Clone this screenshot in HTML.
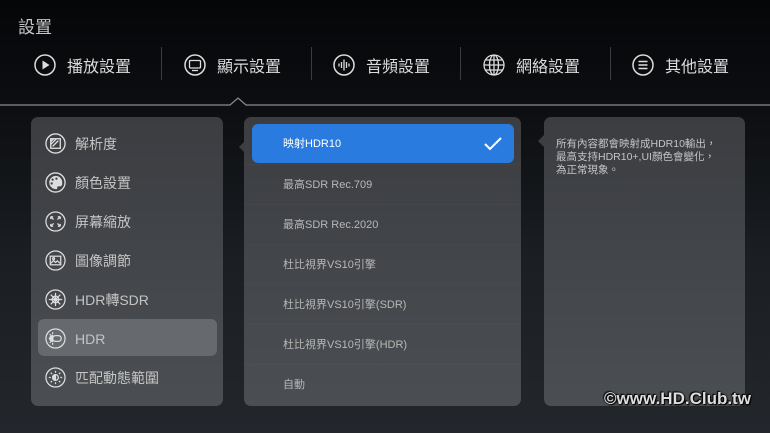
<!DOCTYPE html>
<html><head><meta charset="utf-8"><style>
*{margin:0;padding:0;box-sizing:border-box}
body{width:770px;height:433px;overflow:hidden;position:relative;font-family:"Liberation Sans","Noto Sans CJK TC",sans-serif;background:linear-gradient(#050608 0%,#0c0e11 25%,#1b1e22 60%,#23272c 100%);color:#ccc}
.a{position:absolute}
.title{left:18px;top:13px;font-size:17px;color:#c8c8c8}
.tab{top:53px;height:24px;display:flex;align-items:center;font-size:16px;color:#dcdcdc}
.tab svg{margin-right:11px}
.div{top:47px;width:1px;height:33px;background:#3a3c40}
.panel{border-radius:7px;background:linear-gradient(#3b3d41,#4b4e52)}
.li{left:0;height:39px;display:flex;align-items:center;font-size:14px;color:#c4c4c4}
.li svg{margin:0 9px 0 14px}
.mi{left:0;width:277px;height:40px;line-height:40px;padding-left:39px;font-size:11px;color:#b8b8b8;border-top:1px solid rgba(255,255,255,.025)}
</style></head><body>
<div class="a title">設置</div>
<div class="a tab" style="left:34px"><svg width="22" height="22" viewBox="0 0 22 22"><circle cx="11" cy="11" r="10" fill="none" stroke="#ddd" stroke-width="1.5"/><path d="M8.5 6.5L15.5 11L8.5 15.5Z" fill="#ddd"/></svg>播放設置</div>
<div class="a div" style="left:161px"></div>
<div class="a tab" style="left:184px"><svg width="22" height="22" viewBox="0 0 22 22"><circle cx="11" cy="11" r="10" fill="none" stroke="#ddd" stroke-width="1.5"/><rect x="5.5" y="6.5" width="11" height="7.5" rx="1" fill="none" stroke="#ddd" stroke-width="1.3"/><path d="M8 16.5h6" stroke="#ddd" stroke-width="1.3"/></svg>顯示設置</div>
<div class="a div" style="left:311px"></div>
<div class="a tab" style="left:333px"><svg width="22" height="22" viewBox="0 0 22 22"><circle cx="11" cy="11" r="10" fill="none" stroke="#ddd" stroke-width="1.5"/><path d="M6 9.5v3M8.5 8v6M11 5.5v11M13.5 8v6M16 9.5v3" stroke="#ddd" stroke-width="1.3"/></svg>音頻設置</div>
<div class="a div" style="left:460px"></div>
<div class="a tab" style="left:483px"><svg width="22" height="22" viewBox="0 0 22 22"><g fill="none" stroke="#ddd" stroke-width="1.3"><circle cx="11" cy="11" r="10"/><ellipse cx="11" cy="11" rx="4.5" ry="10"/><path d="M1 11h20M3 6h16M3 16h16M11 1v20"/></g></svg>網絡設置</div>
<div class="a div" style="left:610px"></div>
<div class="a tab" style="left:632px"><svg width="22" height="22" viewBox="0 0 22 22"><circle cx="11" cy="11" r="10" fill="none" stroke="#ddd" stroke-width="1.5"/><path d="M6.5 7.5h9M6.5 11h9M6.5 14.5h9" stroke="#ddd" stroke-width="1.5"/></svg>其他設置</div>
<svg class="a" style="left:0;top:97px" width="770" height="10"><path d="M0 8H230L238 1L246 8H770" fill="none" stroke="#8a8c90" stroke-width="1.2"/></svg>

<div class="a panel" style="left:31px;top:117px;width:192px;height:289px">
<div class="a" style="left:7px;top:202px;width:179px;height:37px;background:#66696d;border-radius:6px"></div>
<div class="a li" style="top:7px"><svg width="21" height="21" viewBox="0 0 22 22"><g fill="none" stroke="#ddd" stroke-width="1.4"><circle cx="11" cy="11" r="10"/><rect x="6" y="6" width="10" height="10"/><path d="M6 12l6-6M6 9l3-3M8 14l6-6"/></g></svg>解析度</div>
<div class="a li" style="top:46px"><svg width="21" height="21" viewBox="0 0 22 22"><circle cx="11" cy="11" r="10" fill="none" stroke="#ddd" stroke-width="1.4"/><path d="M11 4a7 7 0 1 0 1 14c2 0-0.5-3 2-3h2a2.5 2.5 0 0 0 2-3a7 7 0 0 0-7-8z" fill="#ddd"/><circle cx="8" cy="8" r="1.2" fill="#444"/><circle cx="12" cy="7" r="1.2" fill="#444"/><circle cx="7" cy="12" r="1.2" fill="#444"/></svg>顏色設置</div>
<div class="a li" style="top:85px"><svg width="21" height="21" viewBox="0 0 22 22"><g fill="none" stroke="#ddd" stroke-width="1.3"><circle cx="11" cy="11" r="10"/><path d="M6 6l3 3M6 6h2.5M6 6v2.5M16 6l-3 3M16 6h-2.5M16 6v2.5M6 16l3-3M6 16h2.5M6 16v-2.5M16 16l-3-3M16 16h-2.5M16 16v-2.5"/></g></svg>屏幕縮放</div>
<div class="a li" style="top:124px"><svg width="21" height="21" viewBox="0 0 22 22"><g fill="none" stroke="#ddd" stroke-width="1.3"><circle cx="11" cy="11" r="10"/><rect x="5.5" y="6.5" width="11" height="9"/><path d="M6 14l3-3 2 2 2-1.5 3 2.5"/><circle cx="9" cy="9" r="1"/></g></svg>圖像調節</div>
<div class="a li" style="top:163px"><svg width="21" height="21" viewBox="0 0 22 22"><g fill="none" stroke="#ddd" stroke-width="1.3"><circle cx="11" cy="11" r="10"/><path d="M11 4v14M4 11h14M6 6l10 10M16 6L6 16"/><circle cx="11" cy="11" r="3.5"/></g></svg>HDR轉SDR</div>
<div class="a li" style="top:202px"><svg width="21" height="21" viewBox="0 0 22 22"><g fill="none" stroke="#ddd" stroke-width="1.3"><circle cx="11" cy="11" r="10"/><rect x="8" y="8" width="9" height="6" rx="3"/><path d="M8 8a3 3 0 0 0 0 6z" fill="#ddd"/><path d="M4 11h2M8 4.5v2M8 15.5v2M5 6.5l1.3 1.3M5 15.5l1.3-1.3"/></g></svg>HDR</div>
<div class="a li" style="top:241px"><svg width="21" height="21" viewBox="0 0 22 22"><g fill="none" stroke="#ddd" stroke-width="1.3"><circle cx="11" cy="11" r="10"/><circle cx="11" cy="11" r="3"/><path d="M11 8a3 3 0 0 0 0 6z" fill="#ddd"/><path d="M11 4v2M11 16v2M4 11h2M16 11h2M6 6l1.4 1.4M16 6l-1.4 1.4M6 16l1.4-1.4M16 16l-1.4-1.4"/></g></svg>匹配動態範圍</div>
</div>
<svg class="a" style="left:239px;top:141px" width="6" height="12"><path d="M6 0L0 6L6 12Z" fill="#3c3e42"/></svg>

<div class="a panel" style="left:244px;top:117px;width:277px;height:289px">
<div class="a" style="left:8px;top:7px;width:262px;height:39px;background:#2a7be0;border-radius:6px"></div>
<div class="a mi" style="top:7px;color:#fff;border:none">映射HDR10</div>
<svg class="a" style="left:240px;top:20px" width="18" height="14"><path d="M1 7l5 5L17 1" fill="none" stroke="#fff" stroke-width="2"/></svg>
<div class="a mi" style="top:47px">最高SDR Rec.709</div>
<div class="a mi" style="top:87px">最高SDR Rec.2020</div>
<div class="a mi" style="top:127px">杜比視界VS10引擎</div>
<div class="a mi" style="top:167px">杜比視界VS10引擎(SDR)</div>
<div class="a mi" style="top:207px">杜比視界VS10引擎(HDR)</div>
<div class="a mi" style="top:247px">自動</div>
</div>
<svg class="a" style="left:538px;top:135px" width="6" height="12"><path d="M6 0L0 6L6 12Z" fill="#3c3e42"/></svg>

<div class="a panel" style="left:544px;top:117px;width:201px;height:289px">
<div class="a" style="left:12px;top:21px;font-size:10.5px;line-height:13px;color:#c4c4c4;width:185px">所有內容都會映射成HDR10輸出，<br>最高支持HDR10+,UI顏色會變化，<br>為正常現象。</div>
</div>
<div class="a" style="left:604px;top:389px;font-size:17px;font-weight:bold;color:#ddd;text-shadow:0 0 2px #000,1px 1px 1px #000,-1px -1px 1px #000">©www.HD.Club.tw</div>
</body></html>
